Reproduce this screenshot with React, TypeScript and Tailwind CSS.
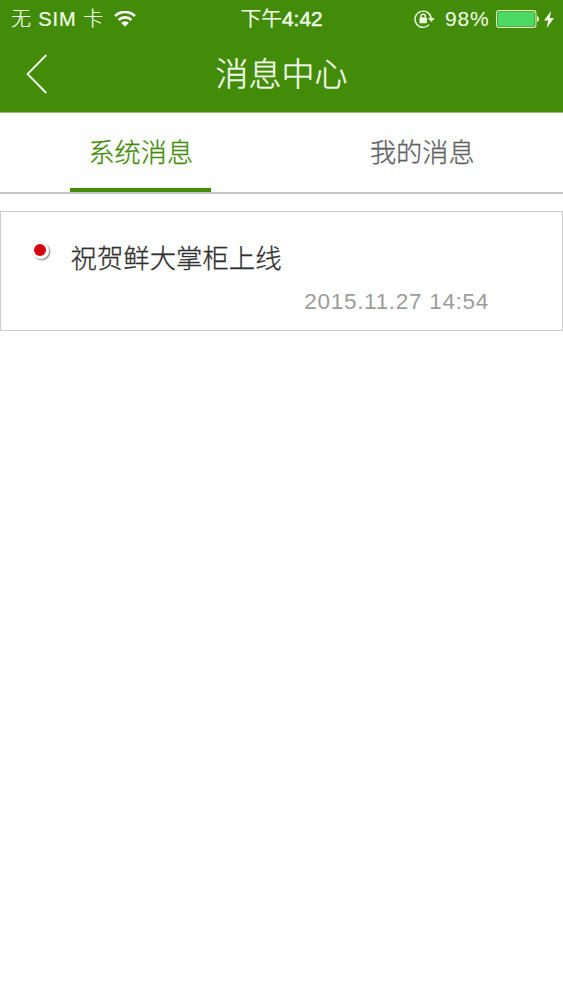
const font = 'font-["Liberation_Sans","Noto_Sans_CJK_SC",sans-serif]';

function WifiIcon() {
  return (
    <svg width="22" height="17" viewBox="0 0 22 17" fill="none" stroke="#fff" strokeWidth="2.6">
      <path d="M1.1 5a14 14 0 0 1 19.8 0" />
      <path d="M4.6 9a9 9 0 0 1 12.8 0" />
      <path d="M11 15.7l-3.8-3.9a5.2 5.2 0 0 1 7.6 0z" fill="#fff" stroke="none" />
    </svg>
  );
}

function RotationLockIcon() {
  return (
    <svg width="21" height="19" viewBox="0 0 21 19" fill="none" stroke="#f2ffe5">
      <path d="M15.2 14.6A8.1 8.1 0 1 1 17.2 8.4" strokeWidth="1.4" />
      <path d="M13.8 8h7l-3.5 4z" fill="#f2ffe5" stroke="none" />
      <rect x="5.5" y="7.6" width="7.4" height="5.6" rx=".6" fill="#f2ffe5" stroke="none" />
      <path d="M7.1 8V6.3a2.1 2.1 0 0 1 4.2 0V8" strokeWidth="1.4" />
    </svg>
  );
}

function StatusBar() {
  return (
    <div className="grid h-9 grid-cols-3 items-center pt-px text-[20px] leading-9 text-[#f4ffe9]">
      <div className="flex items-center pl-[11px]">
        <span className="w-[93px] whitespace-nowrap font-light tracking-[0.9px] [-webkit-text-stroke:0.2px_#f4ffe9]">无 SIM 卡</span>
        <span className="ml-[10px]">
          <WifiIcon />
        </span>
      </div>
      <div className="text-center text-[20.8px] leading-[34px] whitespace-nowrap">
        下午<span className="[-webkit-text-stroke:0.5px_#f4ffe9]">4:42</span>
      </div>
      <div className="flex items-center justify-end pr-[9px]">
        <RotationLockIcon />
        <span className="ml-[10px] w-[45px] text-[21px] tracking-[0.8px]">98%</span>
        <svg className="mb-px ml-[6px]" width="43" height="18" viewBox="0 0 43 18">
          <rect x=".6" y=".6" width="39.3" height="16.8" rx="2.5" fill="none" stroke="#d9f5c2" strokeWidth="1.1" />
          <rect x="2" y="2" width="36.5" height="14" rx="1.2" fill="#4cd964" />
          <path d="M41 6q2 .5 2 3t-2 3z" fill="#eaffd8" />
        </svg>
        <svg className="ml-[5px]" width="10" height="17" viewBox="0 0 10 17">
          <path d="M7 0L0 9.5h4.2L2.8 17 10 7H5.8z" fill="#f4ffe9" />
        </svg>
      </div>
    </div>
  );
}

function Header() {
  return (
    <header className="h-[113px] border-b border-[#9bc07d] bg-[#428c09]">
      <StatusBar />
      <div className="grid h-[76px] grid-cols-[1fr_auto_1fr] items-center">
        <button className="w-fit pl-[26px]" aria-label="返回">
          <svg width="22" height="40" viewBox="0 0 22 40" fill="none" stroke="#f7fff0" strokeWidth="1.8">
            <path d="M20.3 1L1.5 20l18.8 19" />
          </svg>
        </button>
        <h1 className="pt-0.5 text-[33px] leading-[74px] font-light text-[#f7fff0] [-webkit-text-stroke:0.3px_#f7fff0]">
          消息中心
        </h1>
      </div>
    </header>
  );
}

function Tabs() {
  return (
    <nav className="flex h-[81px] border-b-2 border-[#c6c6c6] text-[26.2px] leading-[80px]">
      <button className="flex flex-1 justify-center font-light text-[#428c09] [-webkit-text-stroke:0.3px_#428c09]">
        <span className="h-[79px] w-[141px] border-b-4 border-[#428c09]">系统消息</span>
      </button>
      <button className="flex-1 font-light text-[#606060] [-webkit-text-stroke:0.3px_#606060]">我的消息</button>
    </nav>
  );
}

function Message({ title, date }: { title: string; date: string }) {
  return (
    <article className="mt-[17px] h-[120px] border border-[#cccccc] bg-white pt-[26px]">
      <div className="flex pl-[32px]">
        <span className="mt-[5px] h-4 w-4 rounded-full bg-white pt-px pl-px shadow-[1px_1px_2px_#777]">
          <span className="block h-3 w-3 rounded-full bg-[#d7000f]" />
        </span>
        <h2 className="ml-[21.5px] pt-0.5 text-[26.4px] leading-[38px] font-light text-[#303030] [-webkit-text-stroke:0.3px_#303030]">
          {title}
        </h2>
      </div>
      <time className="mr-[73px] block text-right text-[22.5px] leading-[48px] tracking-[0.7px] text-[#9c9c9c]">
        {date}
      </time>
    </article>
  );
}

export default function App() {
  return (
    <main className={`min-h-screen bg-[#fefefe] ${font}`}>
      <Header />
      <Tabs />
      <Message title="祝贺鲜大掌柜上线" date="2015.11.27 14:54" />
    </main>
  );
}
